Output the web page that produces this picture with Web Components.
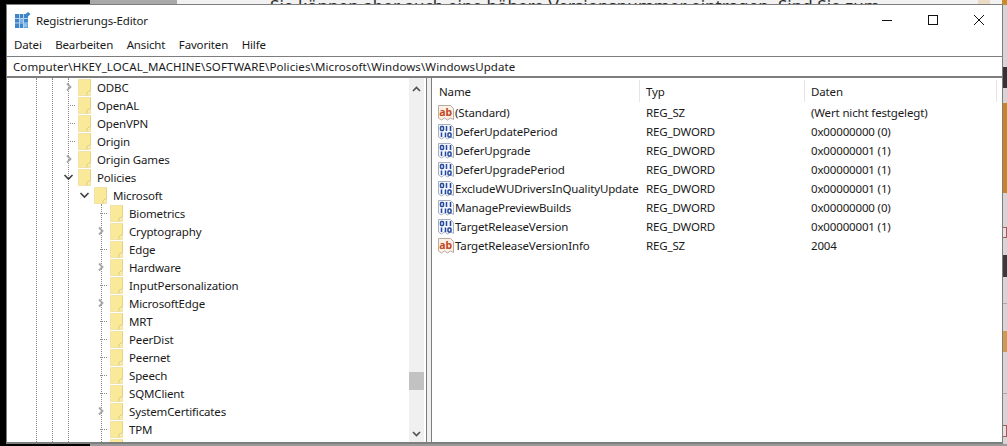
<!DOCTYPE html>
<html lang="de">
<head>
<meta charset="utf-8">
<title>Registrierungs-Editor</title>
<style>
  html, body { margin: 0; height: 100%; background: #000; overflow: hidden; }
  body { font: 11.5px "Noto Sans", sans-serif; color: #1a1a1a; }
</style>
</head>
<body>
<desk-top>
  <reg-window>
    <win-titlebar slot="title">Registrierungs-Editor</win-titlebar>
    <win-menubar slot="menu"></win-menubar>
    <win-address slot="address">Computer\HKEY_LOCAL_MACHINE\SOFTWARE\Policies\Microsoft\Windows\WindowsUpdate</win-address>
    <reg-tree slot="tree"></reg-tree>
    <reg-list slot="list"></reg-list>
  </reg-window>
</desk-top>

<script>
const uiFont = 'font: 11.5px "Noto Sans", sans-serif; letter-spacing: -0.15px; color: #1a1a1a;';

/* page behind the window */
class DeskTop extends HTMLElement {
  constructor() {
    super();
    this.attachShadow({ mode: 'open' }).innerHTML = `
    <style>
      :host { display: block; position: relative; width: 1007px; height: 446px; overflow: hidden; background: #000; box-sizing: border-box; padding: 4px 4px 2px 6px; }
      .back { position: absolute; }
      .txt { left: 270px; top: -6px; font: 17px "Noto Sans", sans-serif; letter-spacing: 0.05px; color: #2b2b2b; white-space: nowrap; }
    </style>
    <div class="back" style="left:90px;top:0;width:87px;height:5px;background:#a9a9a9"></div>
    <div class="back" style="left:177px;top:0;width:830px;height:5px;background:#f1f1f1"></div>
    <div class="back txt">Sie können aber auch eine höhere Versionsnummer eintragen. Sind Sie zum</div>
    <div class="back" style="left:978px;top:0;width:12px;height:5px;background:#eadcc4"></div>
    <div class="back" style="left:1002px;top:0;width:5px;height:446px;background:#d6d6d6"></div>
    <div class="back" style="left:1002px;top:0;width:5px;height:5px;background:#c98a2e"></div>
    <div class="back" style="left:1002px;top:67px;width:5px;height:21px;background:#333"></div>
    <div class="back" style="left:1002px;top:103px;width:5px;height:90px;background:#c8862c"></div>
    <div class="back" style="left:1002px;top:227px;width:5px;height:11px;border:1px solid #a05a5a;box-sizing:border-box;background:#e8e0e0"></div>
    <div class="back" style="left:1002px;top:255px;width:5px;height:22px;background:#3a3a3a"></div>
    <div class="back" style="left:1002px;top:303px;width:5px;height:1px;background:#aaa"></div>
    <div class="back" style="left:1002px;top:331px;width:5px;height:21px;background:#d09a50"></div>
    <div class="back" style="left:1002px;top:393px;width:5px;height:1px;background:#aaa"></div>
    <div class="back" style="left:1002px;top:425px;width:5px;height:12px;border:1px solid #a05a5a;box-sizing:border-box;background:#e8e0e0"></div>
    <div class="back" style="left:90px;top:444px;width:917px;height:2px;background:#9a9a9a"></div>
    <slot></slot>`;
  }
}
customElements.define('desk-top', DeskTop);

/* window frame */
class RegWindow extends HTMLElement {
  constructor() {
    super();
    this.attachShadow({ mode: 'open' }).innerHTML = `
    <style>
      :host { display: flex; flex-direction: column; position: relative; height: 100%; box-sizing: border-box; background: #fff; border: 1px solid #7e7e7e; }
      .panes { flex: 1; display: flex; min-height: 0; border-bottom: 1px solid #7e7e7e; }
      .left { width: 419px; flex: none; min-width: 0; }
      .split { width: 4px; flex: none; background: #f0f0f0; border-left: 1px solid #7e7e7e; border-right: 1px solid #7e7e7e; }
      .right { flex: 1; min-width: 0; }
    </style>
    <slot name="title"></slot>
    <slot name="menu"></slot>
    <slot name="address"></slot>
    <div class="panes">
      <div class="left"><slot name="tree"></slot></div>
      <div class="split"></div>
      <div class="right"><slot name="list"></slot></div>
    </div>`;
  }
}
customElements.define('reg-window', RegWindow);

class WinTitlebar extends HTMLElement {
  constructor() {
    super();
    this.attachShadow({ mode: 'open' }).innerHTML = `
    <style>
      :host { display: flex; align-items: center; height: 29px; padding-left: 8px; padding-top: 1px; box-sizing: border-box; ${uiFont} }
      .ic { width: 16px; height: 16px; margin-right: 5px; flex: none; }
      .t { flex: 1; }
      .b { width: 46px; height: 28px; display: flex; align-items: center; justify-content: center; flex: none; }
      svg { display: block; }
    </style>
    <svg class="ic" viewBox="0 0 16 16">
      <rect x="0" y="2" width="13" height="14" fill="#3f86c9"/>
      <path d="M4.5 2v14M8.5 2v14M0 6.5h13M0 11h13" stroke="#b5d3ee" stroke-width="1"/>
      <rect x="5" y="7" width="3" height="3.5" fill="#7db4e6"/>
      <rect x="9" y="11.5" width="3.5" height="4" fill="#8fc0ea"/>
      <path d="M13 0l2.5 2-2.5 2.5-2.5-2.5z" fill="#3f86c9"/>
    </svg>
    <span class="t"><slot></slot></span>
    <div class="b"><svg width="10" height="10"><path d="M0 5.5h10" stroke="#111"/></svg></div>
    <div class="b"><svg width="10" height="10"><rect x=".5" y=".5" width="9" height="9" fill="none" stroke="#111"/></svg></div>
    <div class="b"><svg width="10" height="10"><path d="M0 0l10 10M10 0L0 10" stroke="#111" stroke-width="1"/></svg></div>`;
  }
}
customElements.define('win-titlebar', WinTitlebar);

class WinMenubar extends HTMLElement {
  constructor() {
    super();
    const items = ['Datei', 'Bearbeiten', 'Ansicht', 'Favoriten', 'Hilfe'];
    this.attachShadow({ mode: 'open' }).innerHTML = `
    <style>
      :host { display: flex; align-items: center; gap: 13.5px; height: 23px; padding-left: 7px; padding-bottom: 1px; box-sizing: border-box; border-bottom: 1px solid #7e7e7e; background: #fff; ${uiFont} }
    </style>
    ${items.map(i => `<span>${i}</span>`).join('')}`;
  }
}
customElements.define('win-menubar', WinMenubar);

class WinAddress extends HTMLElement {
  constructor() {
    super();
    this.attachShadow({ mode: 'open' }).innerHTML = `
    <style>
      :host { display: flex; align-items: center; height: 21px; box-sizing: border-box; padding-left: 6px; border-bottom: 2px solid #7e7e7e; background: #fff; ${uiFont} letter-spacing: 0.1px; white-space: nowrap; }
    </style>
    <slot></slot>`;
  }
}
customElements.define('win-address', WinAddress);

/* left pane */
class TreeItem extends HTMLElement {
  connectedCallback() {
    const level = +this.getAttribute('level');
    const state = this.getAttribute('state');
    let exp = '<span class="tick"></span>';
    if (state == 'closed') exp = '<svg width="16" height="18"><path d="M6 5.5l3.5 3.5-3.5 3.5" fill="none" stroke="#a6a6a6" stroke-width="1.8"/></svg>';
    if (state == 'open') exp = '<svg width="16" height="18"><path d="M3.5 7l4 4 4-4" fill="none" stroke="#404040" stroke-width="1.6"/></svg>';
    const label = this.getAttribute('label');
    this.shadowRoot.innerHTML = `
    <style>
      :host { display: flex; align-items: center; height: 18px; padding-left: ${55 + level * 16}px; ${uiFont} white-space: nowrap; }
      .e { width: 16px; height: 18px; flex: none; position: relative; margin-left: -1px; margin-right: 1px; }
      .tick { position: absolute; left: 7px; top: 9px; width: 7px; border-top: 1px dotted #8a8a8a; }
      svg { display: block; }
      .f { flex: none; margin-right: 6px; }
    </style>
    <span class="e">${exp}</span>
    <svg class="f" width="13" height="17" viewBox="0 0 13 17">
      <path d="M.5.5h12v16H.5z" fill="#f9e998" stroke="#f0e2a8"/>
      <path d="M9 16.5v-3l3.5-2" fill="#fdf6cf" stroke="#dcc878"/>
      <path d="M12.5.5v11" stroke="#e6d180"/>
    </svg>
    ${label ? `<span>${label}</span>` : ''}`;
  }
  constructor() {
    super();
    this.attachShadow({ mode: 'open' });
  }
}
customElements.define('tree-item', TreeItem);

class RegScrollbar extends HTMLElement {
  constructor() {
    super();
    this.attachShadow({ mode: 'open' }).innerHTML = `
    <style>
      :host { display: flex; flex-direction: column; width: 15px; background: #f0f0f0; }
      .a { height: 17px; display: flex; align-items: center; justify-content: center; flex: none; }
      .track { flex: 1; display: flex; flex-direction: column; justify-content: flex-end; padding-bottom: 35px; }
      .thumb { height: 18px; background: #c2c2c2; }
      svg { display: block; }
    </style>
    <div class="a" style="margin-top:2px"><svg width="9" height="6"><path d="M1 5l3.5-3.5L8 5" fill="none" stroke="#505050" stroke-width="1.6"/></svg></div>
    <div class="track"><div class="thumb"></div></div>
    <div class="a"><svg width="9" height="6"><path d="M1 1l3.5 3.5L8 1" fill="none" stroke="#505050" stroke-width="1.6"/></svg></div>`;
  }
}
customElements.define('reg-scrollbar', RegScrollbar);

let treeData = [
  [0, 'closed', 'ODBC'], [0, '', 'OpenAL'], [0, '', 'OpenVPN'], [0, '', 'Origin'],
  [0, 'closed', 'Origin Games'], [0, 'open', 'Policies'], [1, 'open', 'Microsoft'],
  [2, '', 'Biometrics'], [2, 'closed', 'Cryptography'], [2, '', 'Edge'], [2, 'closed', 'Hardware'],
  [2, '', 'InputPersonalization'], [2, 'closed', 'MicrosoftEdge'], [2, '', 'MRT'], [2, '', 'PeerDist'],
  [2, '', 'Peernet'], [2, '', 'Speech'], [2, '', 'SQMClient'], [2, 'closed', 'SystemCertificates'],
  [2, '', 'TPM'], [2, '', '']
];

class RegTree extends HTMLElement {
  constructor() {
    super();
    const dot = x => `.g${x} { position: absolute; left: ${x}px; top: 0; bottom: 0; border-left: 1px dotted #8a8a8a; }`;
    this.attachShadow({ mode: 'open' }).innerHTML = `
    <style>
      :host { display: flex; height: 100%; overflow: hidden; }
      .rows { flex: 1; position: relative; overflow: hidden; min-width: 0; }
      ${dot(29)} ${dot(45)} ${dot(61)}
      .g94 { position: absolute; left: 94px; top: 126px; bottom: 0; border-left: 1px dotted #8a8a8a; }
      reg-scrollbar { flex: none; margin-right: 2px; }
    </style>
    <div class="rows">
      <div class="g29"></div><div class="g45"></div><div class="g61"></div><div class="g94"></div>
      ${treeData.map(r => `<tree-item level="${r[0]}" state="${r[1]}" label="${r[2]}"></tree-item>`).join('')}
    </div>
    <reg-scrollbar></reg-scrollbar>`;
  }
}
customElements.define('reg-tree', RegTree);

/* right pane */
const iconString = `<svg width="16" height="17" viewBox="0 0 16 17">
  <path d="M.5 1.5h12l3 3v11l-3-1.500-3 2-3-2-3 2-3-2z" fill="#fdf1e6" stroke="#b8aca0"/>
  <text x="1.3" y="11.500" font-family="Noto Sans, sans-serif" font-size="10.500" font-weight="700" fill="#c4481f">ab</text>
</svg>`;
const iconBinary = `<svg width="16" height="17" viewBox="0 0 16 17">
  <path d="M.5 1.5h12l3 3v11l-3-1.500-3 2-3-2-3 2-3-2z" fill="#f3f6fc" stroke="#a8b0c0"/>
  <g fill="none" stroke="#24489a" stroke-width="1.500">
    <rect x="2.500" y="3.500" width="3" height="4" rx="1"/><path d="M8.500 3v5M12.500 3v5"/>
    <path d="M3.500 9.500v4.500M7.500 9.500v4.500"/><rect x="10" y="10" width="3" height="4" rx="1"/>
  </g>
</svg>`;

class ListRow extends HTMLElement {
  connectedCallback() {
    const icon = this.getAttribute('type') == 'REG_SZ' ? iconString : iconBinary;
    this.shadowRoot.innerHTML = `
    <style>
      :host { display: grid; grid-template-columns: 208px 165px 1fr; height: 19px; align-items: center; ${uiFont} white-space: nowrap; }
      .n { display: flex; align-items: center; padding-left: 6px; gap: 1px; overflow: hidden; }
      .c { padding-left: 6px; }
      svg { display: block; flex: none; }
    </style>
    <div class="n">${icon}<span>${this.getAttribute('name')}</span></div>
    <div class="c">${this.getAttribute('type')}</div>
    <div class="c">${this.getAttribute('value')}</div>`;
  }
  constructor() {
    super();
    this.attachShadow({ mode: 'open' });
  }
}
customElements.define('list-row', ListRow);

let listData = [
  ['(Standard)', 'REG_SZ', '(Wert nicht festgelegt)'],
  ['DeferUpdatePeriod', 'REG_DWORD', '0x00000000 (0)'],
  ['DeferUpgrade', 'REG_DWORD', '0x00000001 (1)'],
  ['DeferUpgradePeriod', 'REG_DWORD', '0x00000001 (1)'],
  ['ExcludeWUDriversInQualityUpdate', 'REG_DWORD', '0x00000001 (1)'],
  ['ManagePreviewBuilds', 'REG_DWORD', '0x00000000 (0)'],
  ['TargetReleaseVersion', 'REG_DWORD', '0x00000001 (1)'],
  ['TargetReleaseVersionInfo', 'REG_SZ', '2004']
];

class RegList extends HTMLElement {
  constructor() {
    super();
    this.attachShadow({ mode: 'open' }).innerHTML = `
    <style>
      :host { display: block; ${uiFont} padding-top: 2px; }
      .head { display: grid; grid-template-columns: 208px 165px 192px; height: 22px; margin-bottom: 1px; align-items: center; }
      .head span { padding-left: 6px; height: 100%; display: flex; align-items: center; box-sizing: border-box; border-right: 1px solid #e5e5e5; }
    </style>
    <div class="head"><span style="padding-left:7px">Name</span><span>Typ</span><span>Daten</span></div>
    ${listData.map(r => `<list-row name="${r[0]}" type="${r[1]}" value="${r[2]}"></list-row>`).join('')}`;
  }
}
customElements.define('reg-list', RegList);
</script>
</body>
</html>
